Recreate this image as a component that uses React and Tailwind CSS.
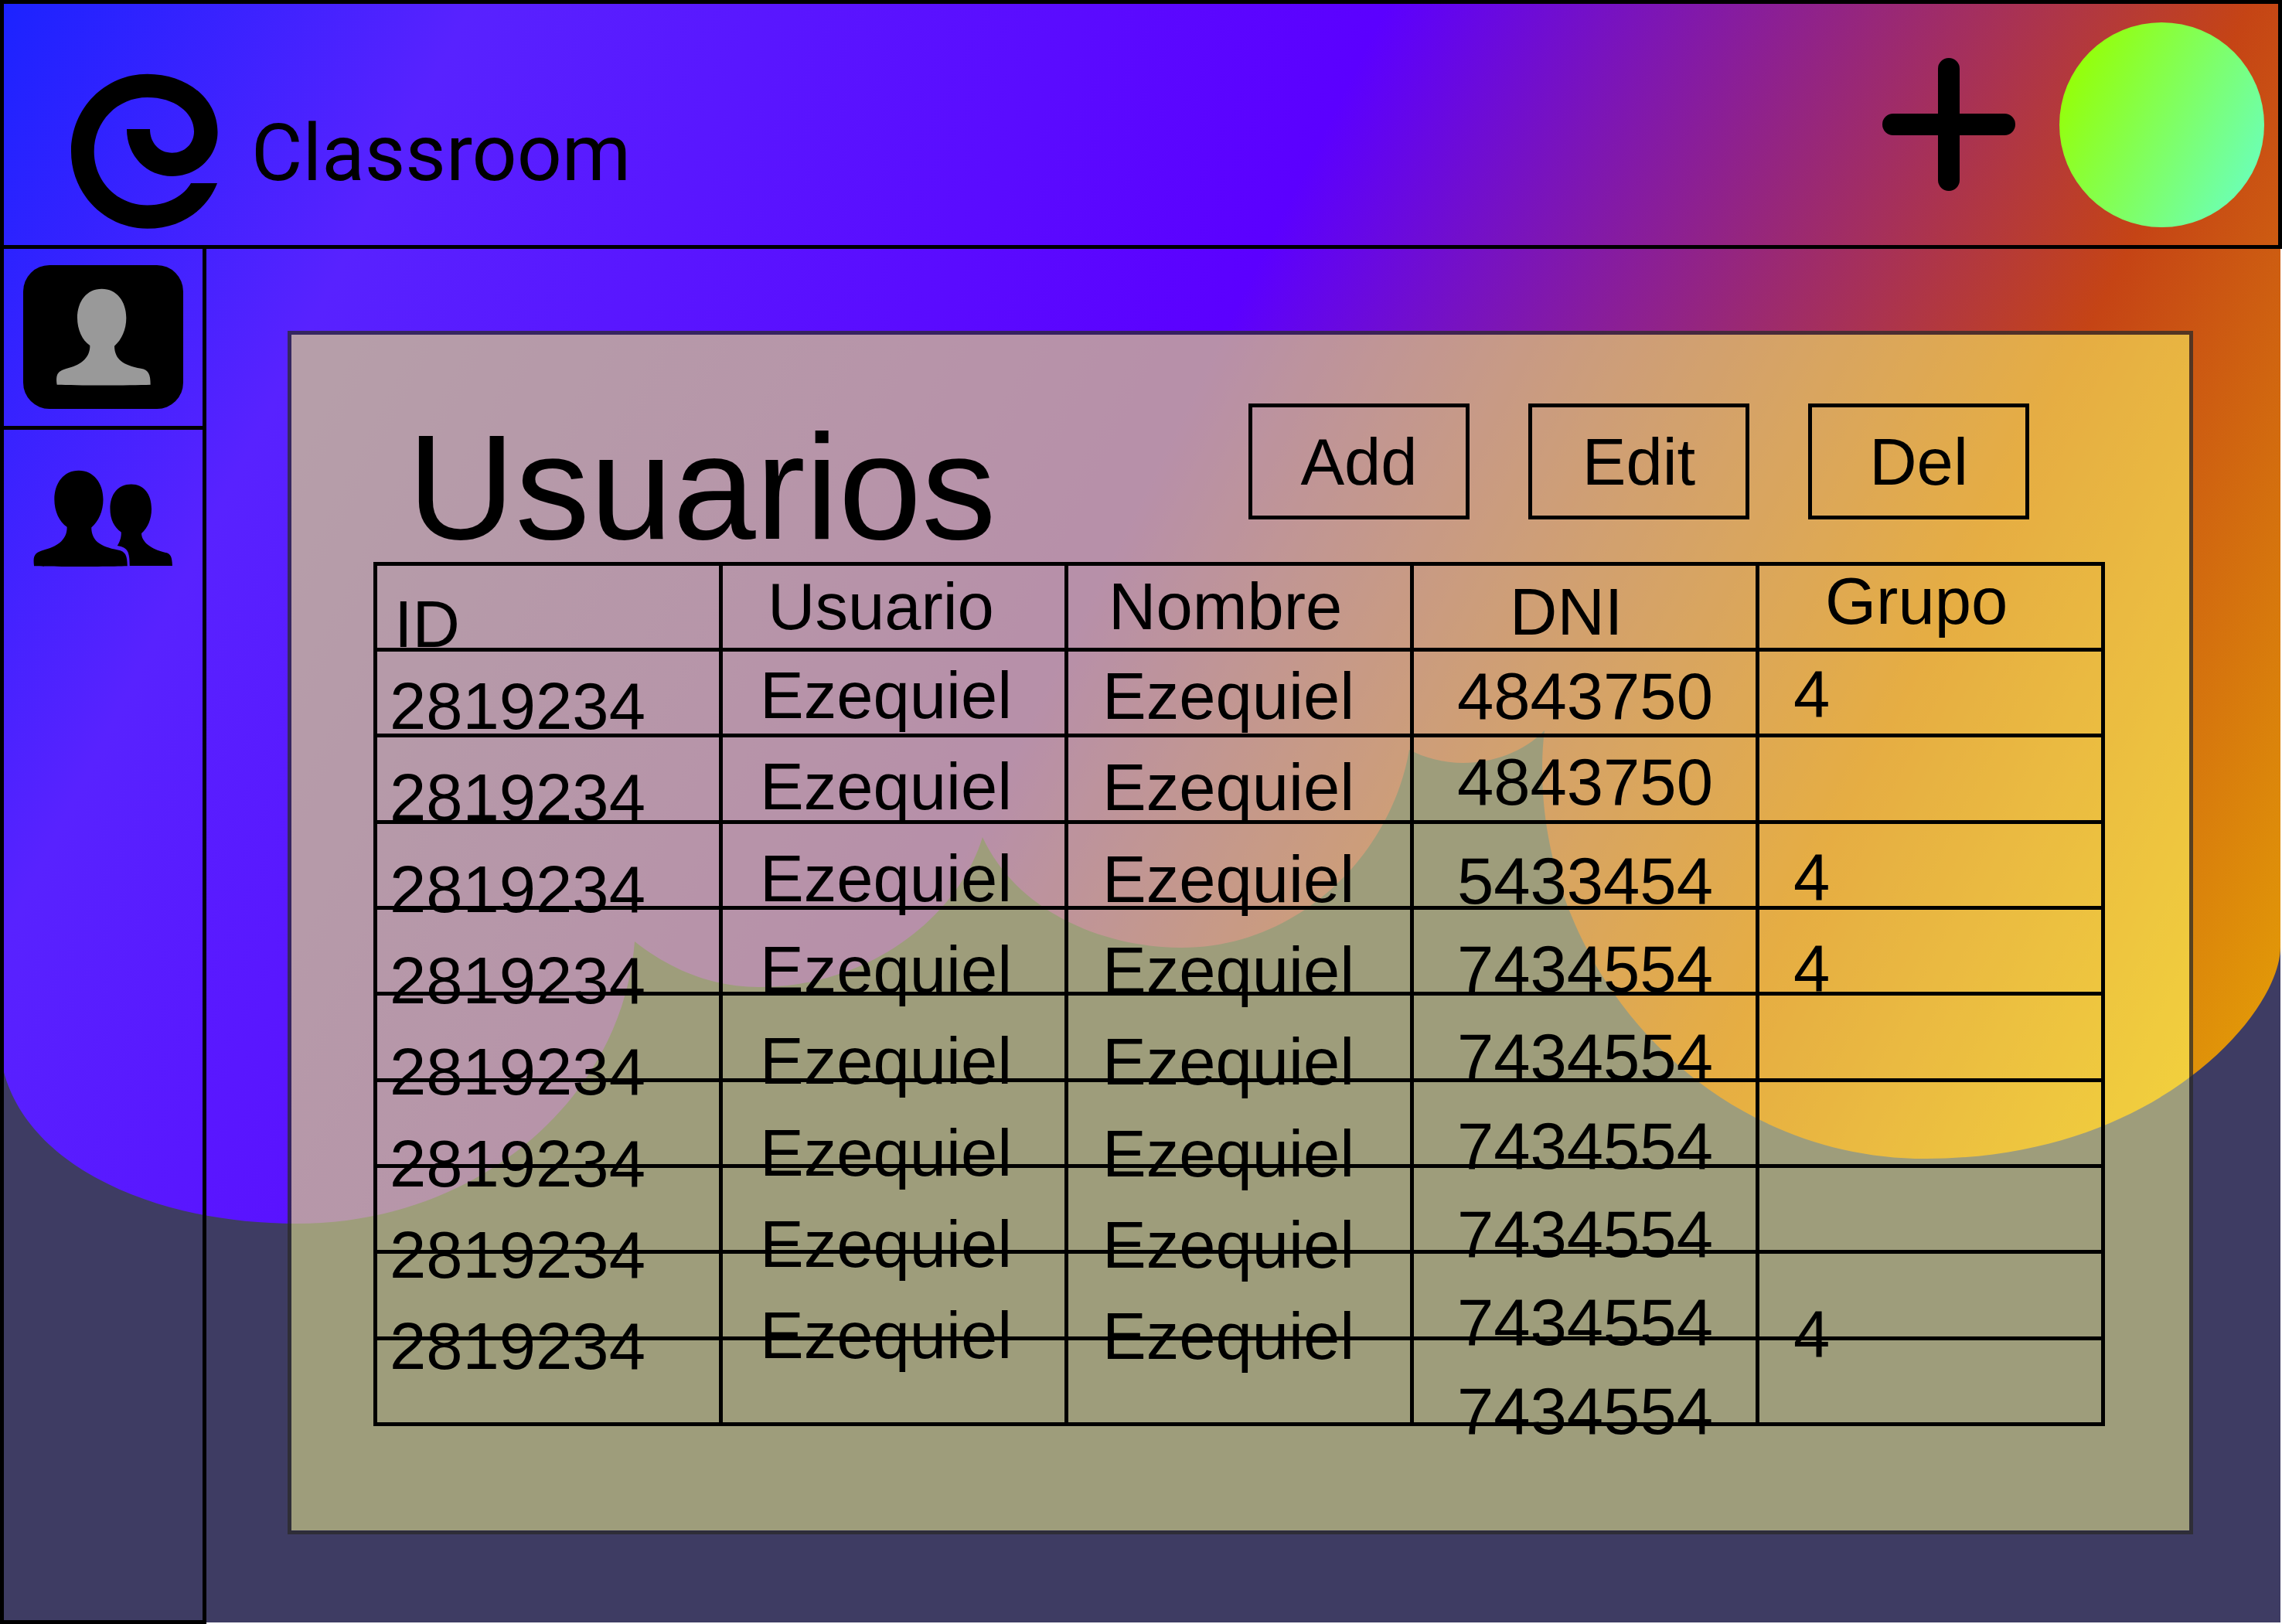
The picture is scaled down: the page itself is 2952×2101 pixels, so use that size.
import React from "react";

const PERSON =
  "M393 192C450 192 488 240 488 305C488 350 470 390 442 414C443 465 475 488 545 501C574 506 582 522 582 564C500 567 290 567 219 564C214 524 220 511 262 500C318 485 348 455 347 412C317 392 298 350 298 305C298 240 335 192 393 192Z";

const COMPANION =
  "M509 947C558 947 588 985 588 1043C588 1083 573 1117 549 1138C549 1170 585 1200 640 1212C663 1215 668 1230 669 1264H503C503 1212 497 1192 455 1186C464 1170 471 1155 470 1133C443 1115 427 1083 427 1043C427 985 458 947 509 947Z";

/* `drop` is how far under its row line a column's text starts; it grows from
   row to row, because the text steps down a little more than a row each time. */
const COLUMNS = [
  {
    key: "id",
    label: "ID",
    head: "pl-[22px] pt-[33px]",
    cell: "pl-4",
    drop: (i) => 28 + i * 7,
  },
  {
    key: "usuario",
    label: "Usuario",
    head: "pl-[58px] pt-[10px]",
    cell: "pl-[48px]",
    drop: (i) => 14 + i * 7,
  },
  {
    key: "nombre",
    label: "Nombre",
    head: "pl-[52px] pt-[10px]",
    cell: "pl-[44px]",
    drop: (i) => 15 + i * 7,
  },
  {
    key: "dni",
    label: "DNI",
    head: "pl-[124px] pt-[17px]",
    cell: "pl-[56px]",
    drop: (i) => (i < 2 ? 15 : 25 + i * 3),
  },
  {
    key: "grupo",
    label: "Grupo",
    head: "pl-[85px] pt-[3px]",
    cell: "pl-[44px]",
    drop: (i) => 12 + i * 7,
  },
];

const ezequiel = { id: "2819234", usuario: "Ezequiel", nombre: "Ezequiel" };

const ROWS = [
  { ...ezequiel, dni: "4843750", grupo: "4" },
  { ...ezequiel, dni: "4843750" },
  { ...ezequiel, dni: "5433454", grupo: "4" },
  { ...ezequiel, dni: "7434554", grupo: "4" },
  { ...ezequiel, dni: "7434554" },
  { ...ezequiel, dni: "7434554" },
  { ...ezequiel, dni: "7434554" },
  { ...ezequiel, dni: "7434554", grupo: "4" },
  { dni: "7434554" },
];

function Backdrop() {
  return (
    <div className="absolute inset-0 pr-0.5 pb-0.5" aria-hidden="true">
      <svg
        className="block h-full w-full"
        viewBox="0 0 2950 2099"
        preserveAspectRatio="none"
      >
        <defs>
          <linearGradient
            id="sunset"
            gradientUnits="userSpaceOnUse"
            x1="0"
            y1="0"
            x2="2990"
            y2="1495"
          >
            <stop offset="0" stopColor="#1b23ff" />
            <stop offset="0.164" stopColor="#5822ff" />
            <stop offset="0.481" stopColor="#5b00ff" />
            <stop offset="0.78" stopColor="#c54415" />
            <stop offset="1" stopColor="#e8ab05" />
          </linearGradient>
        </defs>
        <rect width="2950" height="2099" fill="#3e3c63" />
        <rect x="377" y="433" width="2455" height="1548" fill="#201e96" />
        <path
          fill="url(#sunset)"
          d="M0 0H2950V1225C2950 1310 2790 1499 2491 1499C2210 1499 1995 1260 1995 994C1995 977 1996 960 1998 945C1972 972 1932 987 1893 987C1867 987 1842 980 1823 970C1800 1105 1680 1226 1529 1226C1425 1226 1315 1178 1271 1083C1240 1185 1125 1277 982 1277C922 1277 868 1255 821 1218C805 1420 620 1583 383 1583C190 1583 15 1500 0 1360Z"
        />
      </svg>
    </div>
  );
}

function Header() {
  return (
    <header className="flex h-[322px] items-center justify-between border-[5px] border-black pr-[18px] pl-[86px]">
      <div className="mb-5 flex items-center gap-[43px] self-end">
        <svg
          className="h-[202px] w-[191px]"
          viewBox="91 96 191 202"
          aria-hidden="true"
        >
          <path d="M281 238C268 272 235 296.7 190.6 296.7C136 296.7 92 252 92 197C92 141 136 96.7 190.6 96.7C241 96.7 281.5 128 281.5 172C281.5 204 255 229 222.7 229C190 229 164 203 164 168H194C194 186 206 198.7 222.7 198.7C239 198.7 251 187 251 171C251 146 225 127 190.6 127C152 127 121.7 158 121.7 197C121.7 236 152 266.5 190.6 266.5C217 266.5 238 254 247 238Z" />
        </svg>
        <span className="pt-1 font-[Roboto,sans-serif] text-[102px] leading-[102px]">
          Classroom
        </span>
      </div>
      <div className="flex items-center gap-[57px]">
        <button type="button" aria-label="Crear">
          <svg className="block size-[172px]" viewBox="0 0 172 172">
            <path
              d="M14 86H158M86 14V158"
              stroke="#000"
              strokeWidth="28"
              strokeLinecap="round"
            />
          </svg>
        </button>
        <button
          type="button"
          aria-label="Perfil"
          className="size-[265px] rounded-full bg-[linear-gradient(118deg,#94ff0c_14%,#6bffb8_90%)]"
        />
      </div>
    </header>
  );
}

function Sidebar() {
  return (
    <nav className="w-[267px] shrink-0 border-x-[5px] border-b-[5px] border-black">
      <div className="flex justify-center border-b-[5px] border-black pt-[21px] pb-[22px]">
        <button
          type="button"
          aria-label="Usuarios"
          aria-current="page"
          className="flex h-[186px] w-[207px] items-center justify-center rounded-[34px] bg-black"
        >
          <svg className="h-[126px] w-[124px]" viewBox="214 190 372 378">
            <path fill="#999" d={PERSON} />
          </svg>
        </button>
      </div>
      <div className="flex justify-center pt-[21px]">
        <button
          type="button"
          aria-label="Grupos"
          className="flex h-[186px] w-[207px] items-center justify-center"
        >
          <svg className="h-[125px] w-[181px]" viewBox="128 891 544 376">
            <path transform="translate(-88 701)" d={PERSON} />
            <path d={COMPANION} />
          </svg>
        </button>
      </div>
    </nav>
  );
}

function ActionButton({ children }) {
  return (
    <button
      type="button"
      className="h-[150px] w-[286px] border-[5px] border-black text-[85px] leading-[85px]"
    >
      {children}
    </button>
  );
}

function UsersTable() {
  return (
    <table className="h-[1118px] w-full table-fixed border-collapse text-left text-[85px] leading-[85px]">
      <thead>
        <tr className="h-[111px]">
          {COLUMNS.map((column) => (
            <th
              key={column.key}
              scope="col"
              className="border-[5px] border-black p-0 align-top font-normal"
            >
              <div className={`h-0 ${column.head}`}>{column.label}</div>
            </th>
          ))}
        </tr>
      </thead>
      <tbody>
        {ROWS.map((row, i) => (
          <tr key={i}>
            {COLUMNS.map((column) => (
              <td
                key={column.key}
                className="border-[5px] border-black p-0 align-top"
              >
                <div className="h-0">
                  <div
                    className={column.cell}
                    style={{ paddingTop: column.drop(i) }}
                  >
                    {row[column.key]}
                  </div>
                </div>
              </td>
            ))}
          </tr>
        ))}
      </tbody>
    </table>
  );
}

export default function App() {
  return (
    <div className="relative min-h-screen bg-white font-['Liberation_Sans',Arial,sans-serif] text-black">
      <Backdrop />
      <div className="relative flex min-h-screen flex-col">
        <Header />
        <div className="flex flex-1">
          <Sidebar />
          <main className="min-w-0 flex-1 pt-[106px] pr-[115px] pb-[115px] pl-[105px]">
            <section className="border-[5px] border-[rgba(42,42,40,0.74)] bg-[rgba(255,255,102,0.565)] bg-clip-padding pt-[89px] pr-[109px] pb-[135px] pl-[106px]">
              <div className="flex items-start justify-between pr-[98px] pl-[44px]">
                <h1 className="pt-3 text-[193px] leading-[193px]">Usuarios</h1>
                <div className="flex gap-[76px]">
                  <ActionButton>Add</ActionButton>
                  <ActionButton>Edit</ActionButton>
                  <ActionButton>Del</ActionButton>
                </div>
              </div>
              <UsersTable />
            </section>
          </main>
        </div>
      </div>
    </div>
  );
}
